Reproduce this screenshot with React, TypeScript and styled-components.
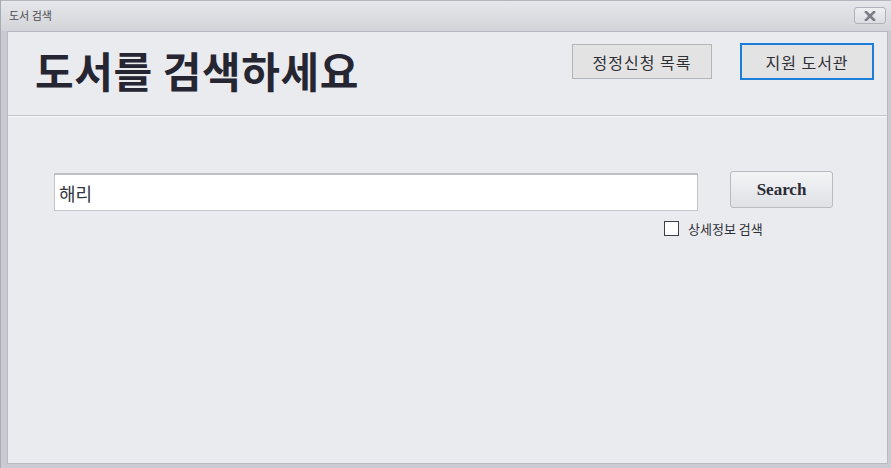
import React from 'react';
import styled, { createGlobalStyle } from 'styled-components';

const GlobalStyle = createGlobalStyle`
    html, body {
        margin: 0;
        padding: 0;
        width: 891px;
        height: 468px;
        overflow: hidden;
        font-family: "Noto Sans CJK KR", "Noto Sans", sans-serif;
    }
`;

const App: React.FC = () => {
    return (
        <>
            <GlobalStyle />
            <Window>
                <TitleBar>
                    <TitleText>도서 검색</TitleText>
                    <CloseButton>
                        <svg width="12" height="10" viewBox="0 0 12 10">
                            <path d="M2 1 L10 9 M10 1 L2 9" stroke="#7a7d85" strokeWidth="2.6" strokeLinecap="square" />
                        </svg>
                    </CloseButton>
                </TitleBar>
                <Body>
                    <Header>
                        <Heading>도서를 검색하세요</Heading>
                        <HeaderButtons>
                            <PlainButton $width={140}>정정신청 목록</PlainButton>
                            <PlainButton $width={134} $focused>지원 도서관</PlainButton>
                        </HeaderButtons>
                    </Header>
                    <SearchArea>
                        <SearchInput defaultValue="해리" />
                        <SearchSide>
                            <SearchButton>Search</SearchButton>
                            <CheckRow>
                                <CheckBox />
                                <CheckLabel>상세정보 검색</CheckLabel>
                            </CheckRow>
                        </SearchSide>
                    </SearchArea>
                </Body>
            </Window>
        </>
    );
};

export default App;

const Window = styled.div`
    width: 891px;
    height: 468px;
    box-sizing: border-box;
    display: flex;
    flex-direction: column;
    background: #c9cad2;
    padding: 0 3px 4px 6px;
    border-left: 1px solid #a9abb3;
`;

const TitleBar = styled.div`
    height: 31px;
    flex-shrink: 0;
    display: flex;
    align-items: flex-start;
    justify-content: space-between;
    margin: 0 -3px 0 -6px;
    padding: 0 5px 0 8px;
    box-sizing: border-box;
    background: linear-gradient(#e6e7ea, #d3d4d9);
    border-top: 1px solid #b4b6bd;
`;

const TitleText = styled.div`
    font-size: 11px;
    color: #4a4c52;
    line-height: 14px;
    padding-top: 7px;
`;

const CloseButton = styled.div`
    width: 32px;
    height: 17px;
    margin-top: 6px;
    box-sizing: border-box;
    border: 1px solid #b0b2b9;
    border-radius: 3px;
    background: linear-gradient(#eeeff1, #dcdde1);
    display: flex;
    align-items: center;
    justify-content: center;
`;

const Body = styled.div`
    flex: 1;
    background: #eaebef;
    border: 1px solid #b8bac2;
    display: flex;
    flex-direction: column;
`;

const Header = styled.div`
    height: 84px;
    box-sizing: border-box;
    border-bottom: 1px solid #c4c5cc;
    box-shadow: 0 1px 0 #f7f7f9;
    display: flex;
    justify-content: space-between;
    align-items: flex-start;
    padding: 0 13px 0 27px;
`;

const Heading = styled.h1`
    margin: 0;
    padding-top: 7px;
    font-size: 42px;
    line-height: 62px;
    font-weight: 700;
    color: #262633;
    letter-spacing: 0.6px;
`;

const HeaderButtons = styled.div`
    display: flex;
    gap: 28px;
    padding-top: 12px;
`;

const PlainButton = styled.div<{ $width: number; $focused?: boolean }>`
    width: ${p => p.$width}px;
    height: ${p => (p.$focused ? 37 : 35)}px;
    margin-top: ${p => (p.$focused ? -1 : 0)}px;
    box-sizing: border-box;
    border: ${p => (p.$focused ? '2px solid #1b7fd9' : '1px solid #b4b5b8')};
    background: #e3e3e4;
    display: flex;
    align-items: center;
    justify-content: center;
    font-size: 16px;
    color: #2f3036;
    letter-spacing: 1px;
`;

const SearchArea = styled.div`
    display: flex;
    align-items: flex-start;
    padding: 55px 0 0 46px;
    gap: 32px;
`;

const SearchInput = styled.input`
    width: 644px;
    height: 38px;
    margin-top: 2px;
    box-sizing: border-box;
    border: 1px solid #c4c5ca;
    border-top: 2px solid #bfc0c5;
    background: #ffffff;
    padding: 0 4px;
    font-family: "Noto Sans CJK KR", sans-serif;
    font-size: 18px;
    color: #333640;
    outline: none;
`;

const SearchSide = styled.div`
    display: flex;
    flex-direction: column;
    align-items: flex-start;
`;

const SearchButton = styled.div`
    width: 103px;
    height: 37px;
    box-sizing: border-box;
    border: 1px solid #b9bbc1;
    border-radius: 3px;
    background: linear-gradient(#f3f4f6, #e0e1e5);
    display: flex;
    align-items: center;
    justify-content: center;
    font-family: "Liberation Serif", serif;
    font-weight: 700;
    font-size: 17px;
    color: #2b2c35;
`;

const CheckRow = styled.div`
    display: flex;
    align-items: center;
    gap: 9px;
    margin-top: 11px;
    margin-left: -66px;
`;

const CheckBox = styled.div`
    width: 15px;
    height: 15px;
    box-sizing: border-box;
    border: 1px solid #3e4048;
    background: #ffffff;
`;

const CheckLabel = styled.span`
    font-size: 13px;
    color: #2e3038;
`;
